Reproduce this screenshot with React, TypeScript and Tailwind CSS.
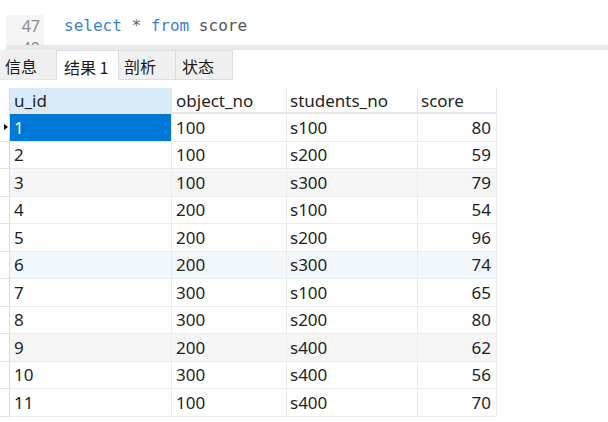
import React from "react";

const rows: [string, string, string, string][] = [
  ["1", "100", "s100", "80"],
  ["2", "100", "s200", "59"],
  ["3", "100", "s300", "79"],
  ["4", "200", "s100", "54"],
  ["5", "200", "s200", "96"],
  ["6", "200", "s300", "74"],
  ["7", "300", "s100", "65"],
  ["8", "300", "s200", "80"],
  ["9", "200", "s400", "62"],
  ["10", "300", "s400", "56"],
  ["11", "100", "s400", "70"],
];

const rowBg = (i: number) =>
  i === 2 || i === 8 ? "bg-[#f6f6f6]" : i === 5 ? "bg-[#f3f8fd]" : "bg-white";

export default function App() {
  return (
    <div className="w-[608px] h-[422px] bg-white overflow-hidden" style={{ fontFamily: '"Noto Sans", "Noto Sans CJK SC", sans-serif' }}>
      {/* Editor */}
      <div className="h-[45px] pt-[15px] flex overflow-hidden">
        <div className="ml-[6px] w-[38px] bg-[#f5f5f5] flex flex-col items-end pr-[4px] text-[#8c8c8c] text-[16px] leading-[22px]">
          <div>47</div>
          <div>48</div>
        </div>
        <div className="ml-[20px] text-[16px] leading-[22px]" style={{ fontFamily: '"DejaVu Sans Mono", monospace' }}>
          <span className="text-[#3b82d6]">select</span>
          <span className="text-[#666]"> * </span>
          <span className="text-[#3b82d6]">from</span>
          <span className="text-[#555]"> score</span>
        </div>
      </div>
      <div className="ml-[6px] h-[5px] bg-[#e9e9e9]" />
      {/* Tabs */}
      <div className="flex h-[30px] text-[16px] text-[#1a1a1a]" style={{ fontFamily: '"Noto Sans CJK SC", sans-serif' }}>
        <div className="w-[56px] bg-[#f0f0f0] flex items-center pl-[5px] pt-[2px] border-b border-[#e6e6e6]">信息</div>
        <div className="w-[63px] bg-white flex items-center pl-[7px] pt-[2px] border-x border-t border-[#dcdcdc]">结果 1</div>
        <div className="w-[57px] bg-[#f0f0f0] flex items-center pl-[5px] pt-[2px] border-r border-t border-b border-[#dcdcdc]">剖析</div>
        <div className="w-[57px] bg-[#f0f0f0] flex items-center pl-[6px] pt-[2px] border-r border-t border-b border-[#dcdcdc]">状态</div>
      </div>
      {/* Table */}
      <div className="mt-[8px] flex text-[17px] text-[#1f1f1f]">
        <div className="w-[10px] border-r border-[#dcdcdc]">
          <div className="h-[26px]" />
          {rows.map((_, i) => (
            <div key={i} className="h-[27.5px] border-b border-[#e3e3e3] flex items-center">
              {i === 0 && (
                <div className="ml-[4px] w-0 h-0 border-y-[3px] border-y-transparent border-l-[4px] border-l-black" />
              )}
            </div>
          ))}
        </div>
        <div>
          <div className="flex h-[26px] border-b-2 border-[#e6e6e6] leading-[25px]">
            <div className="w-[162px] bg-[#d9eaf8] pl-[4px] border-r border-[#e3e3e3]">u_id</div>
            <div className="w-[115px] pl-[4px] border-r border-[#e3e3e3]">object_no</div>
            <div className="w-[131px] pl-[3px] border-r border-[#e3e3e3]">students_no</div>
            <div className="w-[79px] pl-[3px] border-r border-[#e3e3e3]">score</div>
          </div>
          {rows.map((r, i) => (
            <div key={i} className={`flex h-[27.5px] border-b border-[#ececec] items-stretch ${rowBg(i)}`}>
              <div className={`w-[162px] pl-[4px] flex items-center border-r border-[#ececec] ${i === 0 ? "bg-[#0078d7] text-white" : ""}`}>{r[0]}</div>
              <div className="w-[115px] pl-[4px] flex items-center border-r border-[#ececec]">{r[1]}</div>
              <div className="w-[131px] pl-[3px] flex items-center border-r border-[#ececec]">{r[2]}</div>
              <div className="w-[79px] pr-[5px] flex items-center justify-end border-r border-[#ececec]">{r[3]}</div>
            </div>
          ))}
        </div>
      </div>
    </div>
  );
}
